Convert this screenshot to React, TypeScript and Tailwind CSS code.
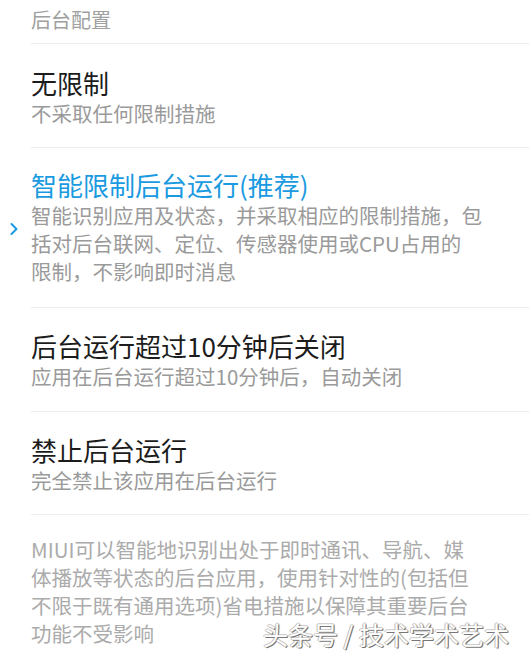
import React from "react";

const font = { fontFamily: '"Noto Sans CJK SC", "Noto Sans", sans-serif' };

function Item({
  title,
  lines,
  active = false,
  pt = "pt-[22px]",
  pb = "pb-[20px]",
}: {
  title: string;
  lines: string[];
  active?: boolean;
  pt?: string;
  pb?: string;
}) {
  return (
    <div className={`relative ${pt} ${pb} border-b border-[#ececec]`}>
      {active && (
        <svg
          className="absolute left-[-22px] top-[74px]"
          width="10"
          height="14"
          viewBox="0 0 10 14"
          fill="none"
        >
          <path d="M2.5 2 L7.5 7 L2.5 12" stroke="#1a9ae0" strokeWidth="2" strokeLinecap="round" strokeLinejoin="round" />
        </svg>
      )}
      <div
        className={`text-[26px] leading-[32px] whitespace-nowrap ${
          active ? "text-[#1a9ae0]" : "text-[#1c1c1c]"
        }`}
      >
        {title}
      </div>
      {lines.map((l, i) => (
        <div key={i} className="text-[20.5px] leading-[28px] text-[#9a9a9a] whitespace-nowrap">
          {l}
        </div>
      ))}
    </div>
  );
}

export default function App() {
  return (
    <div className="w-[529px] h-[664px] bg-white overflow-hidden" style={font}>
      <div className="ml-[31px]">
        <div className="h-[44px] border-b border-[#ececec] text-[20px] leading-[40px] text-[#a0a0a0]">
          后台配置
        </div>
        <Item title="无限制" pt="pt-[23px]" lines={["不采取任何限制措施"]} />
        <Item
          title="智能限制后台运行(推荐)"
          active
          pt="pt-[21px]"
          pb="pb-[22px]"
          lines={[
            "智能识别应用及状态，并采取相应的限制措施，包",
            "括对后台联网、定位、传感器使用或CPU占用的",
            "限制，不影响即时消息",
          ]}
        />
        <Item title="后台运行超过10分钟后关闭" pb="pb-[21px]" lines={["应用在后台运行超过10分钟后，自动关闭"]} />
        <Item title="禁止后台运行" lines={["完全禁止该应用在后台运行"]} />
        <div className="relative pt-[20px] text-[20.5px] leading-[28px] text-[#ababab] whitespace-nowrap">
          <div>MIUI可以智能地识别出处于即时通讯、导航、媒</div>
          <div>体播放等状态的后台应用，使用针对性的(包括但</div>
          <div>不限于既有通用选项)省电措施以保障其重要后台</div>
          <div>功能不受影响</div>
          <div
            className="absolute left-[232px] top-[106px] text-[25px] leading-[26px] text-white whitespace-nowrap"
            style={{
              textShadow:
                "1px 1px 0 #777, -1px 0 0 #bbb, 0 -1px 0 #ccc, 1px 0 1px #888",
            }}
          >
            头条号 / 技术学术艺术
          </div>
        </div>
      </div>
    </div>
  );
}
